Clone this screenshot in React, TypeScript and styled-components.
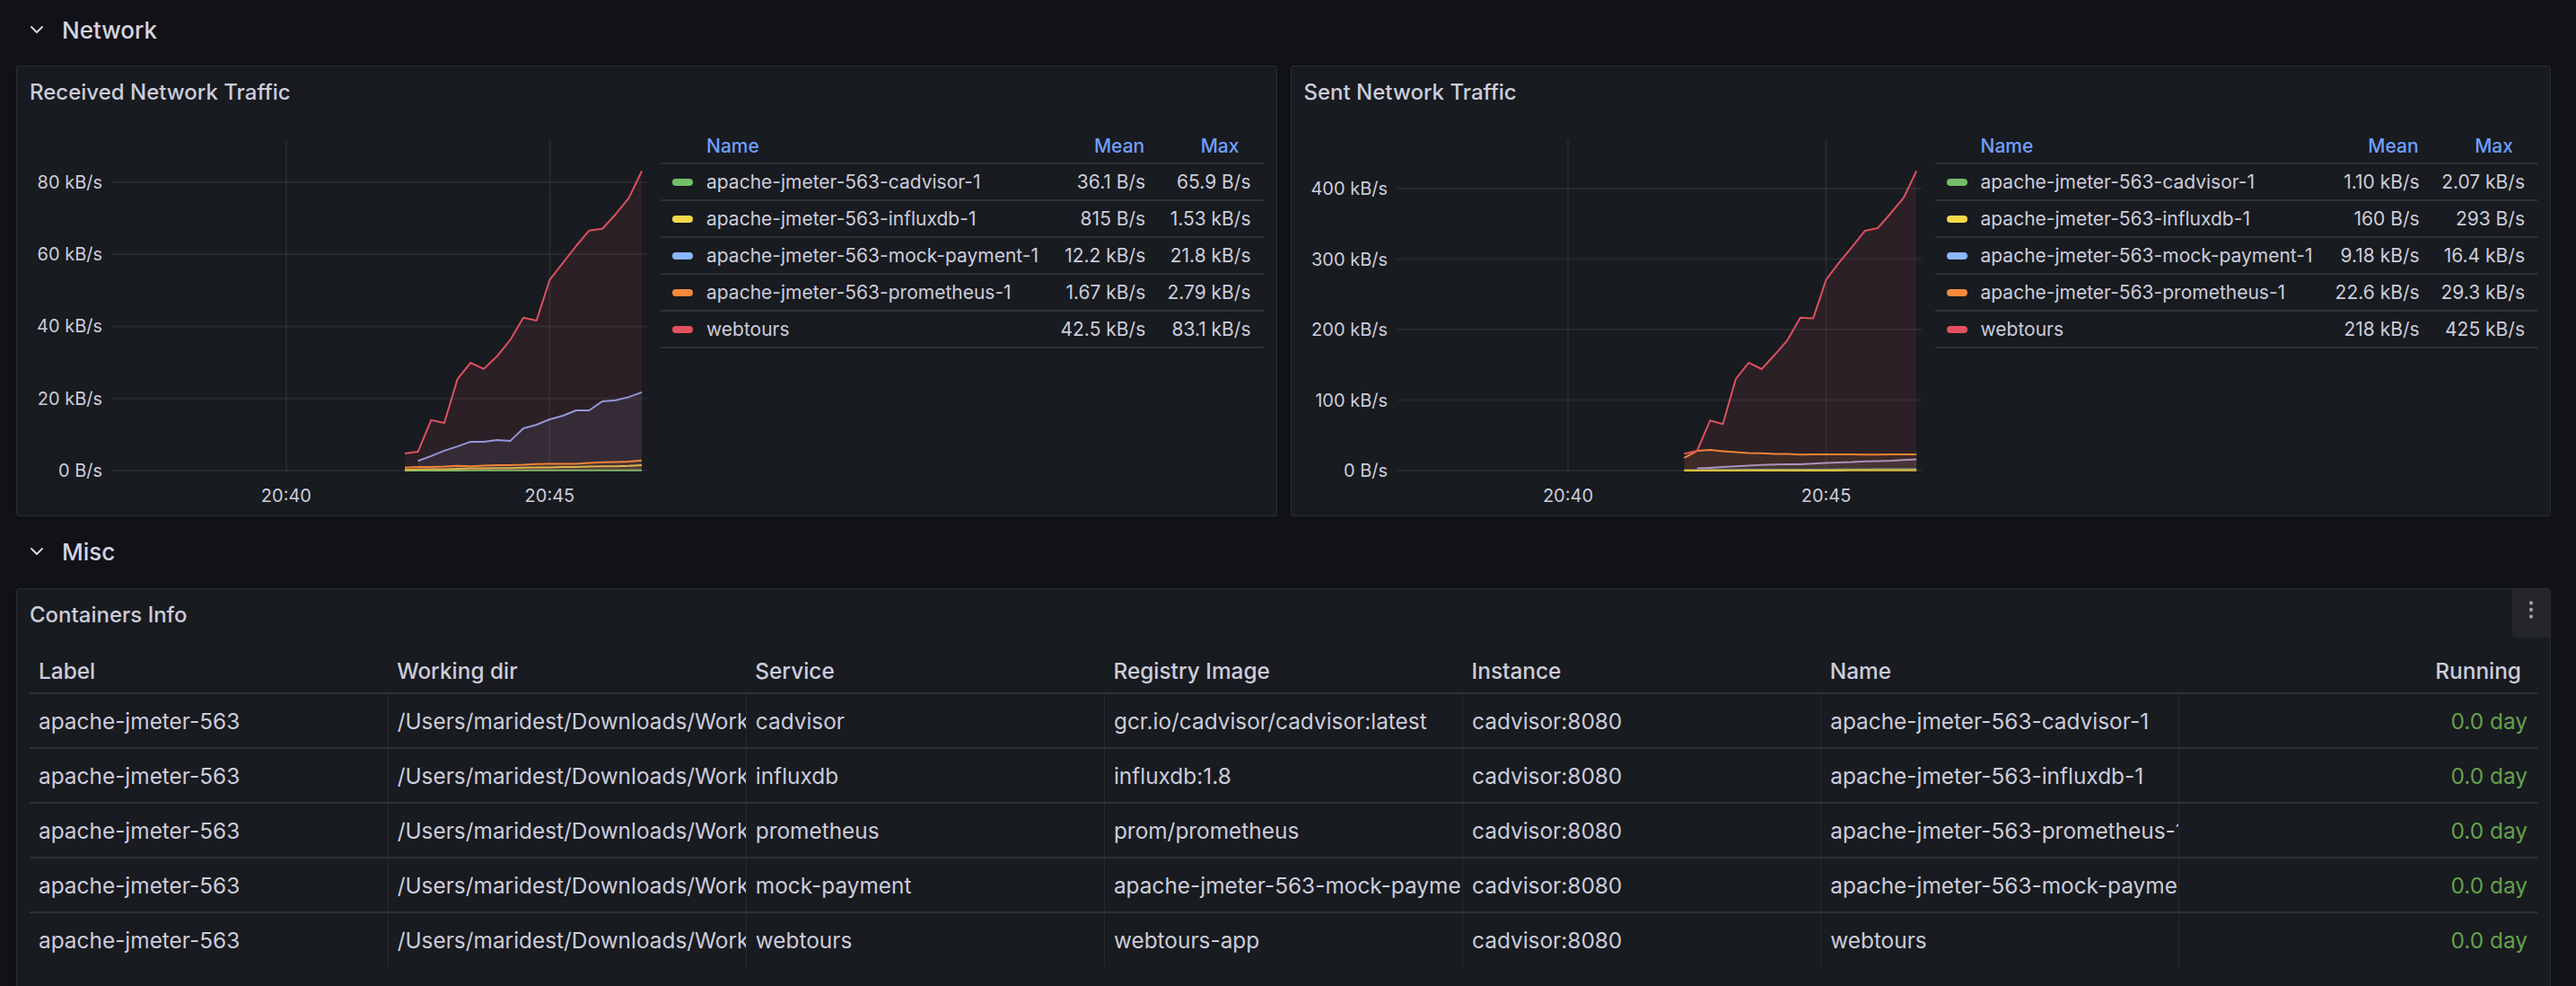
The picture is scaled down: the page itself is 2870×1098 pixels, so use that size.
import React from 'react';
import styled, { createGlobalStyle } from 'styled-components';
import { ChevronDown, EllipsisVertical } from 'lucide-react';

const GlobalStyle = createGlobalStyle`
  html, body {
    margin: 0;
    padding: 0;
    background: #111217;
  }
  body {
    font-family: Inter, "Noto Sans", sans-serif;
    color: #ccccdc;
    -webkit-font-smoothing: antialiased;
  }
  * {
    box-sizing: border-box;
  }
`;

const Page = styled.main`
  width: 2870px;
  height: 1098px;
  overflow: hidden;
  padding: 0 28px 0 18px;
`;

const RowHeader = styled.div<{ $first?: boolean }>`
  display: flex;
  align-items: center;
  gap: 16px;
  height: 66px;
  margin-top: ${(p) => (p.$first ? 0 : 6)}px;
  margin-bottom: ${(p) => (p.$first ? 7 : 8)}px;
  padding-left: 11px;
  font-size: 26px;
  font-weight: 500;
  color: #d4d4e0;
`;

const PanelGrid = styled.div`
  display: grid;
  grid-template-columns: 1fr 1fr;
  gap: 15px;
`;

const Panel = styled.section<{ $height?: number }>`
  background: #181b1f;
  border: 1px solid #2a2c31;
  border-radius: 3px;
  display: flex;
  flex-direction: column;
  height: ${(p) => (p.$height ? `${p.$height}px` : 'auto')};
`;

const PanelHeader = styled.header`
  display: flex;
  align-items: center;
  justify-content: space-between;
  height: 56px;
  padding-left: 14px;
  flex: none;
`;

const PanelTitle = styled.h2`
  margin: 0;
  font-size: 24px;
  font-weight: 500;
  color: #ccccdc;
`;

const MenuButton = styled.button`
  align-self: flex-start;
  width: 42px;
  height: 54px;
  border: none;
  border-radius: 0 2px 0 4px;
  background: #24262c;
  color: #9d9ea8;
  display: flex;
  align-items: center;
  justify-content: center;
  padding: 0 0 8px 0;
`;

const ChartBody = styled.div`
  display: flex;
  gap: 15px;
  padding: 0 14px;
  flex: 1;
`;

const ChartBox = styled.div`
  width: 688px;
  flex: none;
  svg {
    display: block;
  }
`;

const Legend = styled.table`
  flex: 1;
  align-self: flex-start;
  margin-top: 14px;
  border-collapse: collapse;
  table-layout: fixed;
  font-size: 21px;
`;

const LegendHead = styled.th<{ $align: 'left' | 'right'; $w?: number; $padL?: number; $padR?: number }>`
  height: 38px;
  color: #6e9fff;
  font-weight: 500;
  text-align: ${(p) => p.$align};
  width: ${(p) => (p.$w ? `${p.$w}px` : 'auto')};
  padding: 0 ${(p) => p.$padR ?? 0}px 0 ${(p) => p.$padL ?? 0}px;
  border-bottom: 2px solid #2e3137;
`;

const LegendCell = styled.td<{ $align: 'left' | 'right' }>`
  height: 41px;
  padding: 0 14px 0 ${(p) => (p.$align === 'left' ? 13 : 0)}px;
  text-align: ${(p) => p.$align};
  color: #ccccdc;
  white-space: nowrap;
  border-bottom: 2px solid #2e3137;
`;

const SeriesName = styled.span`
  display: flex;
  align-items: center;
  gap: 15px;
`;

const Swatch = styled.i<{ $color: string }>`
  display: block;
  width: 23px;
  height: 8px;
  border-radius: 4px;
  background: ${(p) => p.$color};
`;

const TableBody = styled.div`
  padding: 10px 14px 40px;
`;

const InfoTable = styled.table`
  width: 100%;
  border-collapse: collapse;
  table-layout: fixed;
  font-size: 24.4px;
`;

const InfoHead = styled.th<{ $right?: boolean }>`
  height: 50px;
  padding: 0 ${(p) => (p.$right ? 18 : 10)}px 0 10px;
  text-align: ${(p) => (p.$right ? 'right' : 'left')};
  font-weight: 500;
  color: #ccccdc;
  border-bottom: 2px solid #2e3137;
`;

const InfoCell = styled.td<{ $right?: boolean; $last?: boolean }>`
  height: 61px;
  padding: 0 ${(p) => (p.$right ? 11 : 0)}px 0 10px;
  text-align: ${(p) => (p.$right ? 'right' : 'left')};
  white-space: nowrap;
  overflow: hidden;
  color: ${(p) => (p.$right ? '#64a04c' : '#ccccdc')};
  border-bottom: ${(p) => (p.$last ? 'none' : '2px solid #2e3137')};
  & + & {
    border-left: 1px solid #26292e;
  }
`;

type Series = {
  name: string;
  color: string;
  line: string;
  values: (number | null)[];
  mean: string;
  max: string;
};

type ChartConfig = {
  title: string;
  plotLeft: number;
  yMax: number;
  ticks: number[];
  series: Series[];
};

const W = 688;
const H = 444;
const PLOT_TOP = 26;
const PLOT_BOTTOM = 394;
const T_START = 36.68;
const T_END = 46.85;
const FIRST_T = 42.25;

const fmtTick = (v: number) => (v === 0 ? '0 B/s' : `${v} kB/s`);

const received: ChartConfig = {
  title: 'Received Network Traffic',
  plotLeft: 91,
  yMax: 91.7,
  ticks: [0, 20, 40, 60, 80],
  series: [
    {
      name: 'apache-jmeter-563-cadvisor-1',
      color: '#73bf69',
      line: '#73bf69',
      values: [0.02, 0.03, 0.03, 0.03, 0.03, 0.04, 0.04, 0.04, 0.04, 0.04, 0.04, 0.04, 0.04, 0.05, 0.05, 0.05, 0.05, 0.05, 0.06],
      mean: '36.1 B/s',
      max: '65.9 B/s'
    },
    {
      name: 'apache-jmeter-563-influxdb-1',
      color: '#f2d94a',
      line: '#e5c93a',
      values: [0.2, 0.3, 0.4, 0.4, 0.5, 0.6, 0.6, 0.7, 0.7, 0.8, 0.9, 0.9, 1.0, 1.0, 1.1, 1.2, 1.2, 1.3, 1.5],
      mean: '815 B/s',
      max: '1.53 kB/s'
    },
    {
      name: 'apache-jmeter-563-mock-payment-1',
      color: '#8ab8ff',
      line: '#8c9fe4',
      values: [null, 2.7, 4.0, 5.5, 6.7, 8.0, 8.0, 8.5, 8.2, 11.7, 12.7, 14.2, 15.2, 16.7, 16.7, 19.2, 19.5, 20.4, 21.7],
      mean: '12.2 kB/s',
      max: '21.8 kB/s'
    },
    {
      name: 'apache-jmeter-563-prometheus-1',
      color: '#f5893a',
      line: '#f08a35',
      values: [0.8, 1.0, 1.0, 1.1, 1.3, 1.2, 1.4, 1.5, 1.5, 1.6, 1.8, 1.9, 1.9, 1.9, 2.1, 2.3, 2.4, 2.5, 2.8],
      mean: '1.67 kB/s',
      max: '2.79 kB/s'
    },
    {
      name: 'webtours',
      color: '#e5505f',
      line: '#dc505e',
      values: [4.7, 5.2, 14.0, 13.2, 25.4, 29.9, 28.2, 31.7, 36.2, 42.4, 41.6, 52.9, 57.6, 62.3, 66.6, 67.1, 71.1, 75.6, 83.1],
      mean: '42.5 kB/s',
      max: '83.1 kB/s'
    }
  ]
};

const sent: ChartConfig = {
  title: 'Sent Network Traffic',
  plotLeft: 103,
  yMax: 468.8,
  ticks: [0, 100, 200, 300, 400],
  series: [
    {
      name: 'apache-jmeter-563-cadvisor-1',
      color: '#73bf69',
      line: '#73bf69',
      values: [0.6, 0.8, 0.9, 1.0, 1.0, 1.1, 1.1, 1.2, 1.2, 1.3, 1.3, 1.4, 1.5, 1.6, 1.7, 1.8, 1.9, 2.0, 2.0],
      mean: '1.10 kB/s',
      max: '2.07 kB/s'
    },
    {
      name: 'apache-jmeter-563-influxdb-1',
      color: '#f2d94a',
      line: '#e5c93a',
      values: [0.1, 0.1, 0.15, 0.15, 0.15, 0.15, 0.16, 0.16, 0.16, 0.17, 0.17, 0.18, 0.18, 0.2, 0.2, 0.22, 0.24, 0.26, 0.29],
      mean: '160 B/s',
      max: '293 B/s'
    },
    {
      name: 'apache-jmeter-563-mock-payment-1',
      color: '#8ab8ff',
      line: '#9a9fd8',
      values: [null, 3, 4, 5, 6, 7, 8, 8.5, 9, 9, 10, 11, 11.5, 12, 13, 13.5, 14, 15, 16],
      mean: '9.18 kB/s',
      max: '16.4 kB/s'
    },
    {
      name: 'apache-jmeter-563-prometheus-1',
      color: '#f5893a',
      line: '#f08a35',
      values: [18, 28, 29.3, 27.5, 26, 25, 24.5, 23.5, 23.5, 22.5, 23, 23, 23, 23, 22.5, 22.5, 23, 23, 23],
      mean: '22.6 kB/s',
      max: '29.3 kB/s'
    },
    {
      name: 'webtours',
      color: '#e5505f',
      line: '#dc505e',
      values: [24, 28, 71, 66, 130, 153, 144, 164, 185, 217, 216, 271, 295, 317, 340, 344, 365, 387, 425],
      mean: '218 kB/s',
      max: '425 kB/s'
    }
  ]
};

const hexToRgba = (hex: string, a: number) => {
  const n = parseInt(hex.slice(1), 16);
  return `rgba(${(n >> 16) & 255}, ${(n >> 8) & 255}, ${n & 255}, ${a})`;
};

const TrafficChart: React.FC<{ cfg: ChartConfig }> = ({ cfg }) => {
  const x = (t: number) => cfg.plotLeft + ((t - T_START) / (T_END - T_START)) * (W - cfg.plotLeft);
  const y = (v: number) => PLOT_BOTTOM - (v / cfg.yMax) * (PLOT_BOTTOM - PLOT_TOP);

  return (
    <svg width={W} height={H} viewBox={`0 0 ${W} ${H}`}>
      {cfg.ticks.map((t) => (
        <g key={t}>
          <line x1={cfg.plotLeft} x2={W} y1={y(t)} y2={y(t)} stroke="rgba(204,204,220,0.08)" strokeWidth={2} />
          <text
            x={cfg.plotLeft - 10}
            y={y(t)}
            textAnchor="end"
            dominantBaseline="central"
            fontSize={20}
            fill="#ccccdc"
            fontFamily="Inter, sans-serif"
          >
            {fmtTick(t)}
          </text>
        </g>
      ))}
      {[40, 45].map((m) => (
        <g key={m}>
          <line x1={x(m)} x2={x(m)} y1={PLOT_TOP} y2={PLOT_BOTTOM} stroke="rgba(204,204,220,0.08)" strokeWidth={2} />
          <text
            x={x(m)}
            y={422}
            textAnchor="middle"
            dominantBaseline="central"
            fontSize={20}
            fill="#ccccdc"
            fontFamily="Inter, sans-serif"
          >
            20:{m}
          </text>
        </g>
      ))}
      {cfg.series.map((s) => {
        const pts = s.values
          .map((v, i) => (v === null ? null : [x(FIRST_T + i * 0.25), y(v)]))
          .filter((p): p is number[] => p !== null);
        const line = pts.map((p, i) => `${i ? 'L' : 'M'}${p[0].toFixed(1)},${p[1].toFixed(1)}`).join(' ');
        const area = `M${pts[0][0].toFixed(1)},${PLOT_BOTTOM} ${line.replace('M', 'L')} L${pts[pts.length - 1][0].toFixed(1)},${PLOT_BOTTOM} Z`;
        return (
          <g key={s.name}>
            <path d={area} fill={hexToRgba(s.line, 0.1)} />
            <path d={line} fill="none" stroke={s.line} strokeWidth={2} strokeLinejoin="round" />
          </g>
        );
      })}
    </svg>
  );
};

const TrafficPanel: React.FC<{ cfg: ChartConfig }> = ({ cfg }) => (
  <Panel $height={502}>
    <PanelHeader>
      <PanelTitle>{cfg.title}</PanelTitle>
    </PanelHeader>
    <ChartBody>
      <ChartBox>
        <TrafficChart cfg={cfg} />
      </ChartBox>
      <Legend>
        <thead>
          <tr>
            <LegendHead $align="left" $padL={51}>
              Name
            </LegendHead>
            <LegendHead $align="right" $w={122} $padR={15}>
              Mean
            </LegendHead>
            <LegendHead $align="right" $w={120} $padR={27}>
              Max
            </LegendHead>
          </tr>
        </thead>
        <tbody>
          {cfg.series.map((s) => (
            <tr key={s.name}>
              <LegendCell $align="left">
                <SeriesName>
                  <Swatch $color={s.color} />
                  {s.name}
                </SeriesName>
              </LegendCell>
              <LegendCell $align="right">{s.mean}</LegendCell>
              <LegendCell $align="right">{s.max}</LegendCell>
            </tr>
          ))}
        </tbody>
      </Legend>
    </ChartBody>
  </Panel>
);

// the reference clips long cells at the column edge, so the visible part is what is kept
const workDir = '/Users/maridest/Downloads/Work';

const containers = [
  ['cadvisor', 'gcr.io/cadvisor/cadvisor:latest', 'apache-jmeter-563-cadvisor-1'],
  ['influxdb', 'influxdb:1.8', 'apache-jmeter-563-influxdb-1'],
  ['prometheus', 'prom/prometheus', 'apache-jmeter-563-prometheus-1'],
  ['mock-payment', 'apache-jmeter-563-mock-payment', 'apache-jmeter-563-mock-payment-1'],
  ['webtours', 'webtours-app', 'webtours']
];

const columns = ['Label', 'Working dir', 'Service', 'Registry Image', 'Instance', 'Name'];

export default function App() {
  return (
    <>
      <GlobalStyle />
      <Page>
        <RowHeader $first>
          <ChevronDown size={24} strokeWidth={2} />
          Network
        </RowHeader>
        <PanelGrid>
          <TrafficPanel cfg={received} />
          <TrafficPanel cfg={sent} />
        </PanelGrid>

        <RowHeader>
          <ChevronDown size={24} strokeWidth={2} />
          Misc
        </RowHeader>
        <Panel>
          <PanelHeader>
            <PanelTitle>Containers Info</PanelTitle>
            <MenuButton aria-label="Menu">
              <EllipsisVertical size={26} strokeWidth={2} />
            </MenuButton>
          </PanelHeader>
          <TableBody>
            <InfoTable>
              <thead>
                <tr>
                  {columns.map((c) => (
                    <InfoHead key={c}>{c}</InfoHead>
                  ))}
                  <InfoHead $right>Running</InfoHead>
                </tr>
              </thead>
              <tbody>
                {containers.map(([service, image, name], i) => {
                  const last = i === containers.length - 1;
                  return (
                    <tr key={service}>
                      <InfoCell $last={last}>apache-jmeter-563</InfoCell>
                      <InfoCell $last={last}>{workDir}</InfoCell>
                      <InfoCell $last={last}>{service}</InfoCell>
                      <InfoCell $last={last}>{image}</InfoCell>
                      <InfoCell $last={last}>cadvisor:8080</InfoCell>
                      <InfoCell $last={last}>{name}</InfoCell>
                      <InfoCell $last={last} $right>
                        0.0 day
                      </InfoCell>
                    </tr>
                  );
                })}
              </tbody>
            </InfoTable>
          </TableBody>
        </Panel>
      </Page>
    </>
  );
}
